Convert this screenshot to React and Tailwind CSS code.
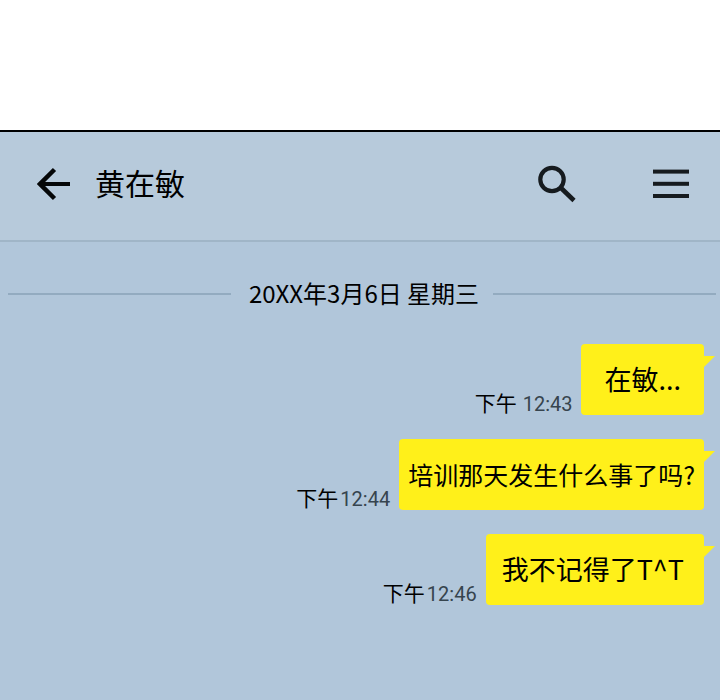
const messages = [
  { id: 1, text: '在敏...', period: '下午', time: '12:43', bubble: 'px-[23px] text-[27px]', gap: 'gap-[6px]' },
  { id: 2, text: '培训那天发生什么事了吗?', period: '下午', time: '12:44', bubble: 'px-[9px] text-[25px]', gap: 'gap-[2px]' },
  { id: 3, text: '我不记得了T^T', period: '下午', time: '12:46', bubble: 'pl-4 pr-5 text-[27px]', gap: 'gap-[2px]' },
];

function BackIcon() {
  return (
    <svg width="34" height="34" viewBox="0 0 34 34" fill="none" stroke="#050708" strokeWidth="4.5" aria-hidden="true">
      <path d="M17.5 2.5 L3 17 L17.5 31.5" />
      <path d="M3 17 H33" strokeWidth="4" />
    </svg>
  );
}

function SearchIcon() {
  return (
    <svg width="38" height="38" viewBox="0 0 38 38" fill="none" stroke="#161b1f" strokeWidth="4.2" aria-hidden="true">
      <circle cx="14" cy="14.5" r="11.7" />
      <path d="M22.5 22.5 L36 35.5" strokeWidth="4.6" />
    </svg>
  );
}

function MenuIcon() {
  return (
    <svg width="36" height="30" viewBox="0 0 36 30" fill="#161b1f" aria-hidden="true">
      <rect y="0.6" width="36" height="4" />
      <rect y="12.8" width="36" height="4" />
      <rect y="25" width="36" height="4" />
    </svg>
  );
}

function Message({ message }) {
  return (
    <li className="flex items-end justify-end gap-[9px]">
      <div className={`flex items-baseline leading-[22px] ${message.gap}`}>
        <span className="text-[21px]">{message.period}</span>
        <time className="font-['Roboto',sans-serif] text-[20px] text-[#36444e]">{message.time}</time>
      </div>
      <div className={`relative flex h-[71px] items-center rounded-[4px] bg-[#fff01a] ${message.bubble}`}>
        <p className="whitespace-nowrap">{message.text}</p>
        {/* Speech tail on the sender's side */}
        <svg className="absolute left-full top-3" width="11" height="11" viewBox="0 0 11 11" aria-hidden="true">
          <path d="M0 0 H11 L0 11 Z" fill="#fff01a" />
        </svg>
      </div>
    </li>
  );
}

export default function App() {
  return (
    <div className="flex min-h-screen flex-col bg-white pt-[130px] font-['Noto_Sans_CJK_SC',sans-serif] text-black">
      <main className="flex-1 border-t-2 border-black bg-[#b1c6da]">
        <header className="flex h-[110px] items-center border-b-2 border-[#a0b5c7] bg-[#b7cadb] pb-1 pl-[37px] pr-[31px]">
          <button type="button" aria-label="返回" className="mr-6">
            <BackIcon />
          </button>
          <h1 className="flex-1 pb-1 text-[30px]">黄在敏</h1>
          <button type="button" aria-label="搜索">
            <SearchIcon />
          </button>
          <button type="button" aria-label="菜单" className="ml-[77px]">
            <MenuIcon />
          </button>
        </header>

        <div className="mt-8 flex items-center pl-2 pr-1">
          <div className="h-[2px] flex-1 bg-[#93abc0]" />
          <p className="pb-[2px] pl-[18px] pr-[14px] text-[24px] leading-[38px]">20XX年3月6日 星期三</p>
          <div className="h-[2px] flex-1 bg-[#93abc0]" />
        </div>

        <ul className="mt-[30px] flex flex-col gap-6 pr-4">
          {messages.map((message) => (
            <Message key={message.id} message={message} />
          ))}
        </ul>
      </main>
    </div>
  );
}
